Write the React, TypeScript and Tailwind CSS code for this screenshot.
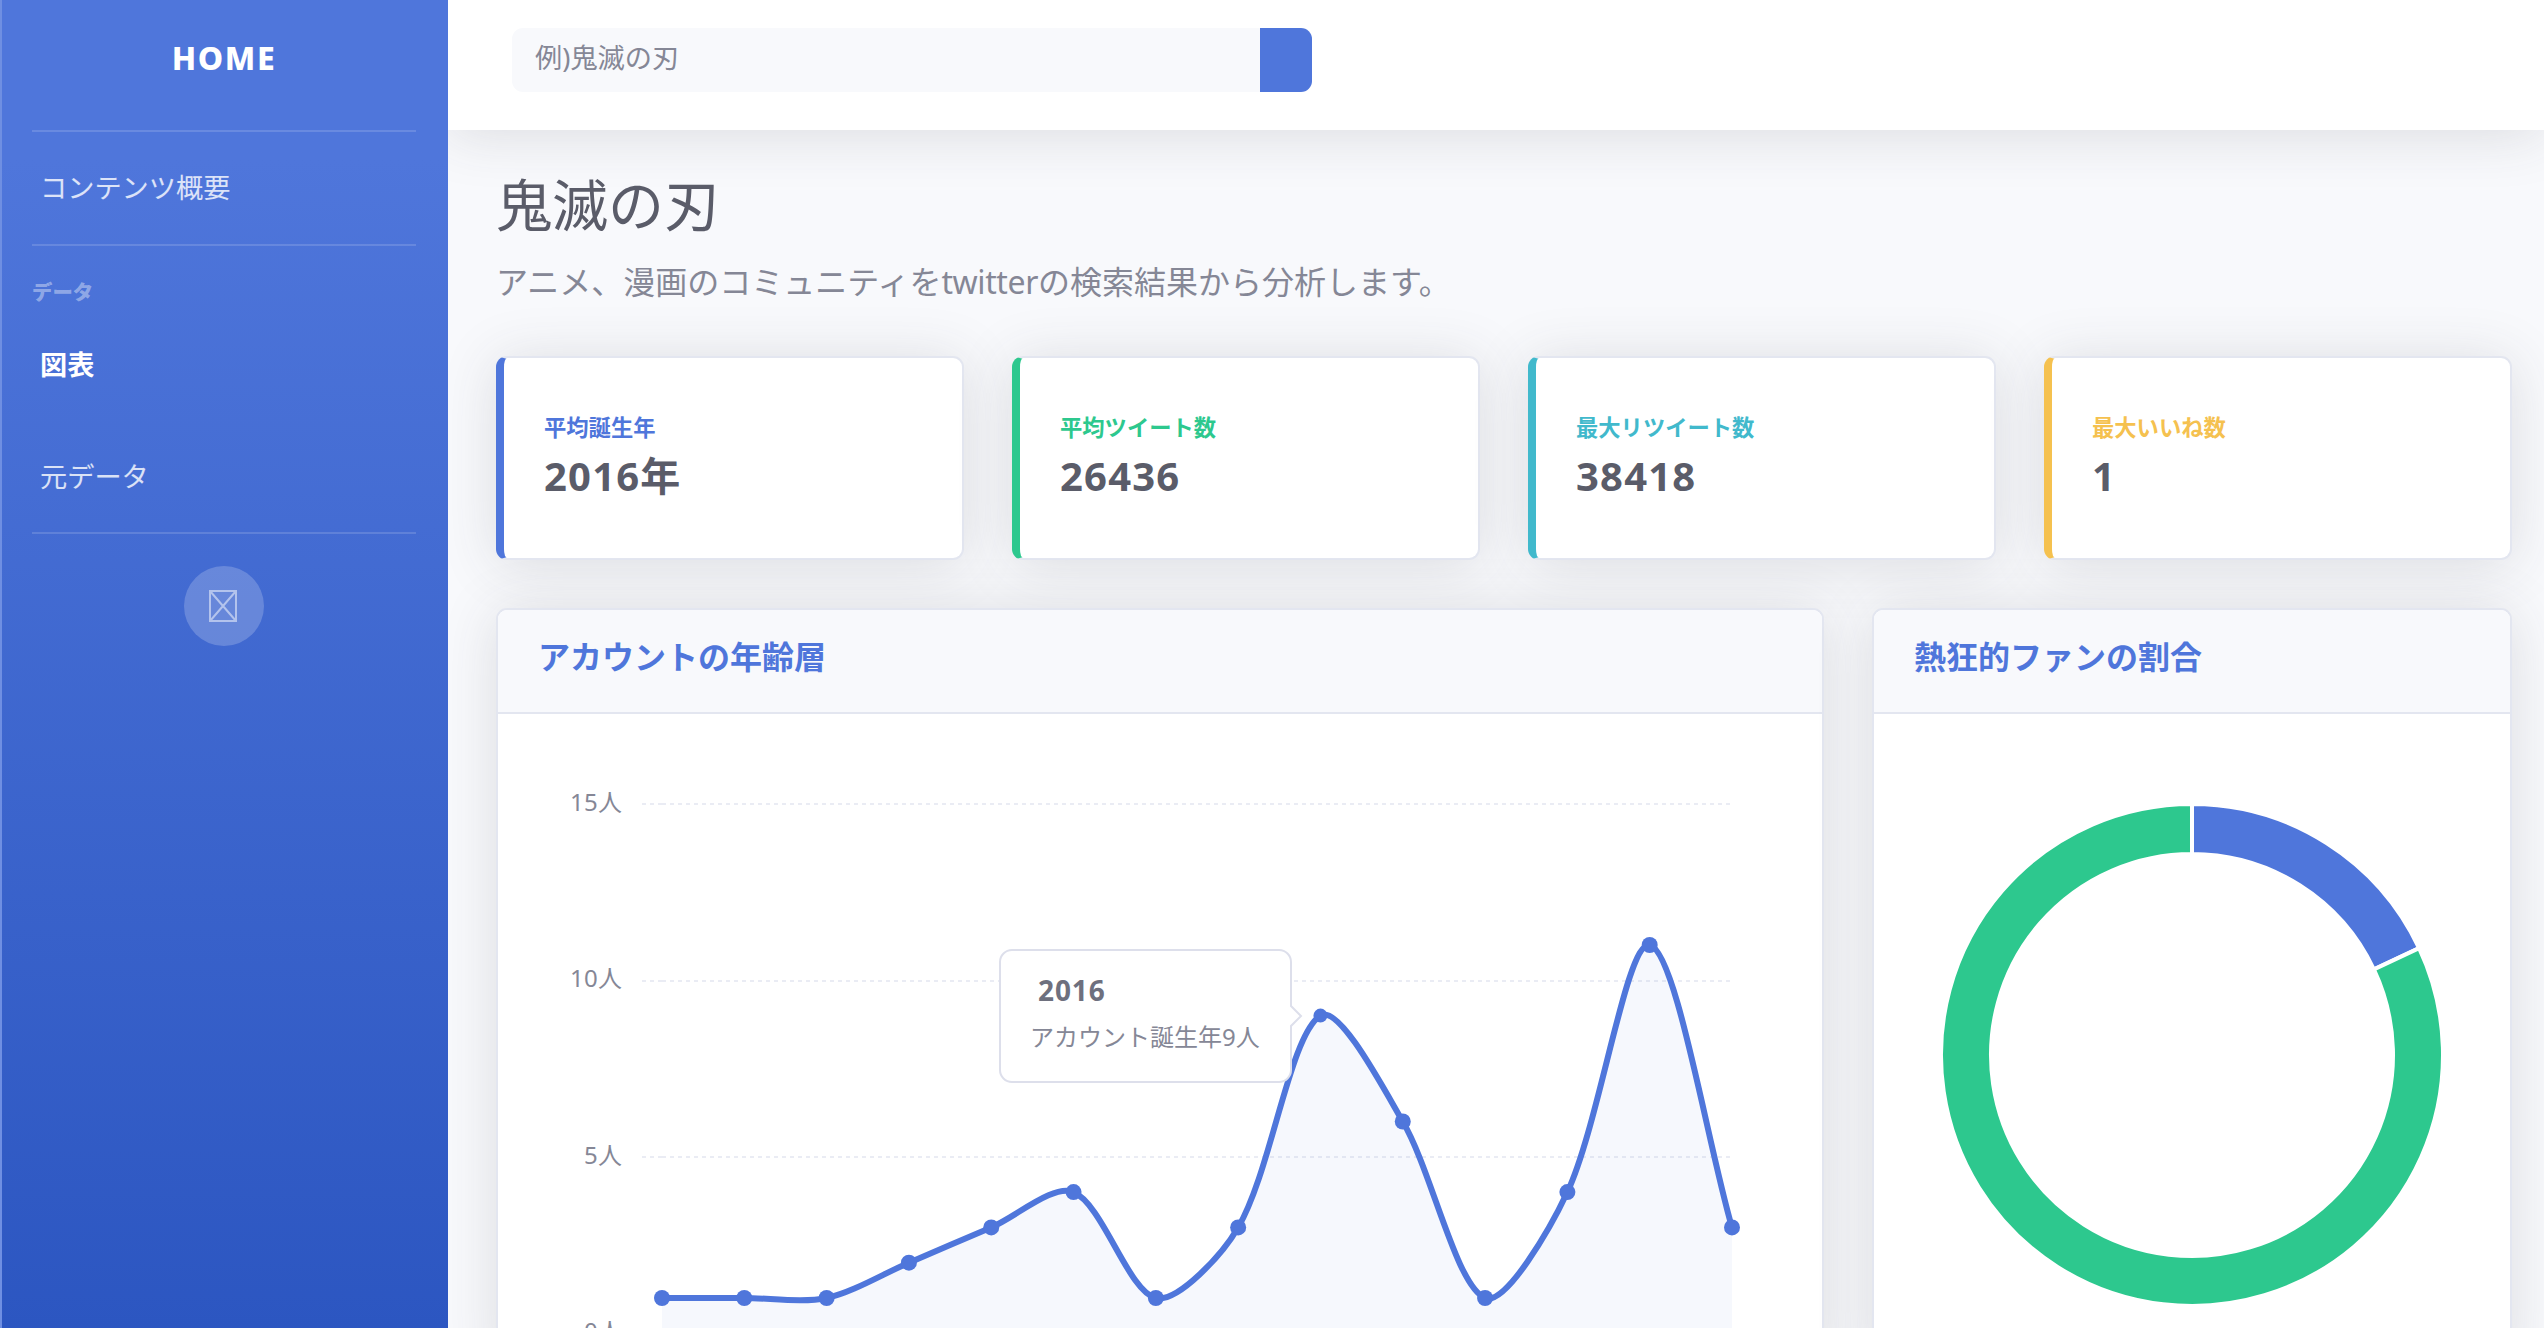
import React from "react";

const values = [1, 1, 1, 2, 3, 4, 1, 3, 9, 6, 1, 4, 11, 3];
const CHART_X = 496;
const CHART_Y = 714;
const points = values.map((v, i) => ({
  x: 662 - CHART_X + (i * 1070) / 13,
  y: 1333.3 - CHART_Y - v * 35.3,
}));

type Point = { x: number; y: number };

// Cubic spline through the points, tension 0.3
function spline(pts: Point[]): string {
  const t = 0.3;
  const controls = pts.map((cur, i) => {
    const prev = pts[i - 1] ?? cur;
    const next = pts[i + 1] ?? cur;
    const d01 = Math.hypot(cur.x - prev.x, cur.y - prev.y);
    const d12 = Math.hypot(next.x - cur.x, next.y - cur.y);
    const fa = (t * d01) / (d01 + d12);
    const fb = (t * d12) / (d01 + d12);
    return {
      before: { x: cur.x - fa * (next.x - prev.x), y: cur.y - fa * (next.y - prev.y) },
      after: { x: cur.x + fb * (next.x - prev.x), y: cur.y + fb * (next.y - prev.y) },
    };
  });
  return pts
    .map((p, i) => {
      if (i === 0) return `M${p.x},${p.y}`;
      const a = controls[i - 1].after;
      const b = controls[i].before;
      return `C${a.x},${a.y} ${b.x},${b.y} ${p.x},${p.y}`;
    })
    .join(" ");
}

const line = spline(points);
const area = `${line} L${points[13].x},620 L${points[0].x},620 Z`;

const gridLines = [
  { label: "15人", y: 90, ty: 96.5 },
  { label: "10人", y: 267, ty: 273 },
  { label: "5人", y: 443, ty: 449.5 },
  { label: "0人", y: 619, ty: 626 },
];

function AreaChart() {
  return (
    <svg width="1324" height="614" viewBox="2 0 1324 614" className="block">
      {gridLines.map((g) => (
        <g key={g.label}>
          <path d={`M146,${g.y} H166 M166,${g.y} H1234`} stroke="#eaecf4" strokeWidth="2" strokeDasharray="4 4" />
          <text x="126" y={g.ty} textAnchor="end" fontSize="24" fill="#858796">
            <tspan letterSpacing="0.3">{g.label.slice(0, -1)}</tspan>
            <tspan>人</tspan>
          </text>
        </g>
      ))}
      <path d={area} fill="#4e73df" fillOpacity="0.05" />
      <path d={line} fill="none" stroke="#4f76db" strokeWidth="6" strokeLinejoin="round" />
      {points.map((p, i) => (
        <circle key={i} cx={p.x} cy={p.y} r={i === 8 ? 7 : 8} fill="#4f76db" />
      ))}
      <path
        d="M516,236 H783 a12,12 0 0 1 12,12 V292 L805,302 L795,312 V356 a12,12 0 0 1 -12,12 H516 a12,12 0 0 1 -12,-12 V248 a12,12 0 0 1 12,-12 Z"
        fill="#fff"
        stroke="#dddfeb"
        strokeWidth="2"
      />
      <text x="542" y="287" fontSize="28" fontWeight="700" fill="#6e707e" letterSpacing="0.9">
        2016
      </text>
      <text x="534" y="331.5" fontSize="24" fill="#858796">
        アカウント誕生年9人
      </text>
    </svg>
  );
}

function Doughnut() {
  const cx = 320;
  const cy = 341;
  const R = 251;
  const r = 201;
  const a = 0.18 * 2 * Math.PI;
  const sx = Math.sin(a);
  const sy = -Math.cos(a);
  const blue = `M${cx},${cy - R} A${R},${R} 0 0 1 ${cx + R * sx},${cy + R * sy} L${cx + r * sx},${cy + r * sy} A${r},${r} 0 0 0 ${cx},${cy - r} Z`;
  const green = `M${cx + R * sx},${cy + R * sy} A${R},${R} 0 1 1 ${cx},${cy - R} L${cx},${cy - r} A${r},${r} 0 1 0 ${cx + r * sx},${cy + r * sy} Z`;
  return (
    <svg width="636" height="614" viewBox="2 0 636 614" className="block">
      <path d={blue} fill="#4f76db" stroke="#fff" strokeWidth="4" />
      <path d={green} fill="#2dc88e" stroke="#fff" strokeWidth="4" />
    </svg>
  );
}

const stats = [
  { label: "平均誕生年", value: "2016年", edge: "border-l-[#4f76db]", text: "text-[#4f76db]" },
  { label: "平均ツイート数", value: "26436", edge: "border-l-[#2dc88e]", text: "text-[#2dc88e]" },
  { label: "最大リツイート数", value: "38418", edge: "border-l-[#41b9cc]", text: "text-[#41b9cc]" },
  { label: "最大いいね数", value: "1", edge: "border-l-[#f5c14f]", text: "text-[#f5c14f]" },
];

function Sidebar() {
  return (
    <aside className="flex h-[1328px] w-[448px] shrink-0 flex-col overflow-hidden border-l-2 border-[#6f8fe2] bg-linear-to-b from-[#4f76db] from-12% to-[#2c56c1] pr-8 pl-[30px] text-white">
      <div className="flex h-[130px] items-start justify-center pt-[38px] text-[32px] leading-[40px] font-extrabold tracking-[1.6px]">
        HOME
      </div>
      <hr className="h-[2px] shrink-0 border-0 bg-white/15" />
      <a className="flex h-[112px] items-center pl-2 text-[27.2px] text-white/80">コンテンツ概要</a>
      <hr className="h-[2px] shrink-0 border-0 bg-white/15" />
      <div className="mt-[31px] h-[31px] text-[20.4px] leading-[31px] font-extrabold text-white/40">データ</div>
      <a className="mt-[37px] h-[40px] pl-2 text-[27.2px] leading-[40px] font-bold">図表</a>
      <a className="mt-[72px] h-[40px] pl-2 text-[27.2px] leading-[40px] text-white/80">元データ</a>
      <hr className="mt-[35px] h-[2px] shrink-0 border-0 bg-white/15" />
      <button className="mt-8 flex size-20 shrink-0 items-center justify-center self-center rounded-full bg-white/20">
        <svg width="28" height="32" viewBox="0 0 28 32" className="mr-[3px]" fill="none" stroke="#fff" strokeOpacity="0.5" strokeWidth="2">
          <path d="M1,1 H27 V31 H1 Z M1,1 L27,31 M27,1 L1,31" />
        </svg>
      </button>
    </aside>
  );
}

export default function App() {
  return (
    <div className="flex h-[1328px] w-[2544px] overflow-hidden bg-[#f8f9fc] font-['Noto_Sans','Noto_Sans_CJK_JP',sans-serif] text-[#858796]">
      <Sidebar />
      <div className="flex min-w-0 flex-1 flex-col overflow-hidden">
        <header className="h-[130px] shrink-0 bg-white pt-7 pl-16 shadow-[0_4.8px_56px_rgba(58,59,69,0.15)]">
          <div className="flex h-16 w-[800px] overflow-hidden rounded-[11px]">
            <div className="h-16 flex-1 bg-[#f8f9fc] pl-[23px] text-[27.2px] leading-[59px]">例)鬼滅の刃</div>
            <button className="h-16 w-[52px] bg-[#4f76db]" />
          </div>
        </header>
        <main className="pr-8 pl-12">
          <h1 className="mt-[40px] h-[68px] text-[56px] leading-[68px] text-[#5a5c69]">鬼滅の刃</h1>
          <p className="mt-[20px] h-[48px] text-[32px] leading-[48px] whitespace-nowrap">
            アニメ、漫画のコミュニティを<span className="tracking-[-0.4px]">twitter</span>の検索結果から分析します。
          </p>
          <div className="mt-[50px] grid grid-cols-4 gap-12">
            {stats.map((s) => (
              <div
                key={s.label}
                className={`flex h-[204px] flex-col justify-center rounded-[11px] border-2 border-l-8 border-[#e3e6f0] bg-white pl-10 font-bold shadow-[0_4.8px_56px_rgba(58,59,69,0.15)] ${s.edge}`}
              >
                <div className={`mb-[10px] -mt-[2px] h-[28px] text-[22.3px] leading-[28px] ${s.text}`}>{s.label}</div>
                <div className="h-[48px] text-[40px] leading-[48px] tracking-[1.2px] text-[#5a5c69]">{s.value}</div>
              </div>
            ))}
          </div>
          <div className="mt-12 grid grid-cols-[1328px_640px] gap-12">
            {["アカウントの年齢層", "熱狂的ファンの割合"].map((title, i) => (
              <section
                key={title}
                className="h-[760px] overflow-hidden rounded-[11px] border-2 border-[#e3e6f0] bg-white shadow-[0_4.8px_56px_rgba(58,59,69,0.15)]"
              >
                <h2 className="h-[104px] border-b-2 border-[#e3e6f0] bg-[#f8f9fc] pt-7 pl-10 text-[32px] leading-[38px] font-bold text-[#4f76db]">
                  {title}
                </h2>
                {i === 0 ? <AreaChart /> : <Doughnut />}
              </section>
            ))}
          </div>
        </main>
      </div>
    </div>
  );
}
